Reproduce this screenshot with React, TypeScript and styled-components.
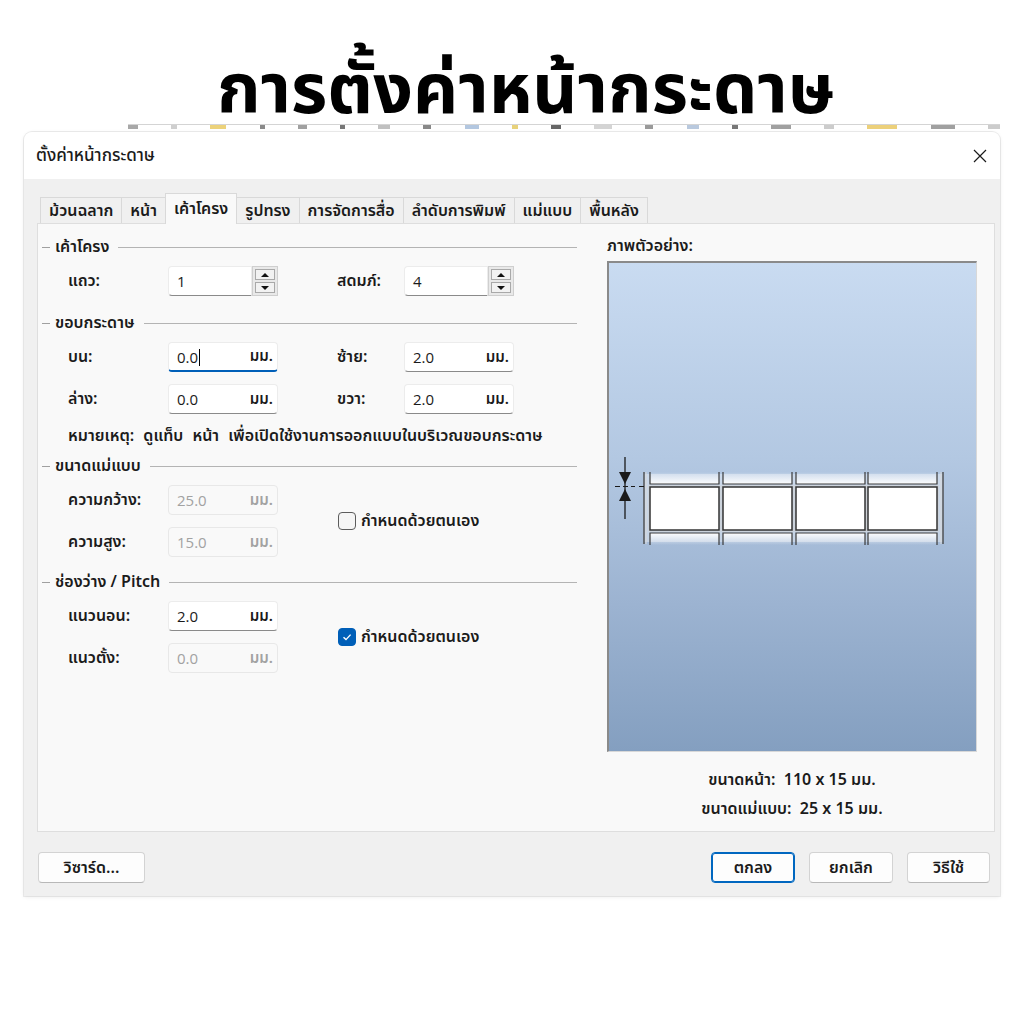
import React from 'react';
import styled, { createGlobalStyle } from 'styled-components';

const THAI = `"Noto Sans Thai", "Leelawadee UI", Tahoma, "Noto Sans", sans-serif`;

const GlobalStyle = createGlobalStyle`
  html, body {
    margin: 0;
    background: #ffffff;
    font-family: ${THAI};
    color: #1b1b1b;
  }
`;

const Page = styled.div`
  width: 1024px;
  height: 1024px;
  overflow: hidden;
  display: flex;
  flex-direction: column;
`;

const Heading = styled.h1`
  margin: 0;
  height: 124px;
  box-sizing: border-box;
  padding: 49px 0 0 28px;
  text-align: center;
  font-size: 70px;
  font-weight: 700;
  line-height: 86px;
  color: #000;
  white-space: nowrap;
`;

/* cut-off toolbar of the window behind the dialog */
const Strip = styled.div`
  height: 7px;
  margin: 0 24px 0 128px;
  display: flex;
  align-items: flex-start;
  justify-content: space-between;
  border-top: 1px solid #d4d4d4;
  overflow: hidden;
`;

const Chip = styled.span<{ $w: number; $c: string }>`
  width: ${p => p.$w}px;
  height: 4px;
  background: ${p => p.$c};
  flex: none;
`;

const Dialog = styled.div`
  margin-left: 24px;
  width: 976px;
  background: #f0f0f0;
  border-radius: 8px 8px 0 0;
  box-shadow: 0 0 0 1px rgba(0, 0, 0, 0.07), 0 1px 4px rgba(0, 0, 0, 0.08);
  overflow: hidden;
`;

const TitleBar = styled.div`
  height: 47px;
  background: #ffffff;
  display: flex;
  align-items: center;
  justify-content: space-between;
  padding: 0 12px;
  font-size: 17px;
  font-weight: 500;
`;

const Body = styled.div`
  padding: 14px 5px 0 13px;
`;

const TabBar = styled.div`
  display: flex;
  align-items: flex-end;
  height: 30px;
  padding-left: 3px;
  position: relative;
  z-index: 1;
`;

const Tab = styled.div<{ $active?: boolean }>`
  height: ${p => (p.$active ? 31 : 26)}px;
  box-sizing: border-box;
  padding: 0 8px;
  margin-right: -1px;
  margin-bottom: ${p => (p.$active ? -1 : 0)}px;
  display: flex;
  align-items: center;
  font-size: 16px;
  font-weight: 600;
  border: 1px solid #d9d9d9;
  border-bottom: none;
  background: ${p => (p.$active ? '#f9f9f9' : '#f0f0f0')};
  white-space: nowrap;
`;

const Panel = styled.div`
  height: 609px;
  box-sizing: border-box;
  border: 1px solid #dedede;
  background: #f9f9f9;
  display: flex;
`;

const LeftCol = styled.div`
  width: 552px;
  box-sizing: border-box;
  padding: 15px 12px 0 4px;
  display: flex;
  flex-direction: column;
`;

const GroupHeader = styled.div<{ $gap?: number }>`
  display: flex;
  align-items: center;
  height: 16px;
  margin-top: ${p => p.$gap ?? 0}px;
  font-size: 16px;
  font-weight: 600;
  white-space: nowrap;
  &::before {
    content: '';
    width: 8px;
    height: 1px;
    background: #a0a0a0;
    margin-right: 5px;
  }
  &::after {
    content: '';
    flex: 1;
    height: 1px;
    background: #b4b4b4;
    margin-left: 9px;
  }
`;

const FieldGrid = styled.div`
  display: grid;
  grid-template-columns: 100px 110px 59px 67px 110px;
  grid-auto-rows: 30px;
  row-gap: 12px;
  align-items: center;
  padding-left: 26px;
  margin-top: 11px;
`;

const FieldLabel = styled.span`
  font-size: 16px;
  font-weight: 600;
  white-space: nowrap;
`;

const TextBox = styled.div<{ $disabled?: boolean; $focused?: boolean }>`
  height: 30px;
  box-sizing: border-box;
  display: flex;
  align-items: center;
  padding: 0 4px 0 8px;
  background: ${p => (p.$disabled ? '#f9f9f9' : '#ffffff')};
  border: 1px solid ${p => (p.$disabled ? '#e8e8e8' : '#ececec')};
  border-bottom: ${p =>
    p.$focused ? '2px solid #005fb8' : p.$disabled ? '1px solid #e8e8e8' : '1px solid #8a8a8a'};
  border-radius: 4px;
  color: ${p => (p.$disabled ? '#a2a2a2' : '#1b1b1b')};
`;

const Value = styled.span`
  flex: 1;
  font-family: "Open Sans", ${THAI};
  font-size: 15px;
`;

const Caret = styled.span`
  display: inline-block;
  width: 1px;
  height: 17px;
  background: #000;
  vertical-align: -3px;
  margin-left: 1px;
`;

const Unit = styled.span`
  font-size: 15px;
  font-weight: 600;
`;

const Spinner = styled.div`
  display: flex;
  height: 30px;
`;

const SpinText = styled(TextBox)`
  flex: 1;
  border-radius: 4px 0 0 4px;
`;

const SpinButtons = styled.div`
  width: 26px;
  box-sizing: border-box;
  display: flex;
  flex-direction: column;
  gap: 2px;
  padding: 2px;
  background: #e9e9e9;
  border: 1px solid #cfcfcf;
`;

const SpinButton = styled.div<{ $down?: boolean }>`
  flex: 1;
  border: 1px solid #a9a9a9;
  background: #f2f2f2;
  display: flex;
  align-items: center;
  justify-content: center;
  &::after {
    content: '';
    border-left: 4px solid transparent;
    border-right: 4px solid transparent;
    ${p => (p.$down ? 'border-top: 4px solid #111;' : 'border-bottom: 4px solid #111;')}
  }
`;

const CheckField = styled.label`
  grid-column: 4 / span 2;
  grid-row: span 2;
  display: flex;
  align-items: center;
  gap: 5px;
  font-size: 16px;
  font-weight: 600;
  margin-left: 1px;
  white-space: nowrap;
`;

const Box = styled.span<{ $checked?: boolean }>`
  width: 18px;
  height: 18px;
  box-sizing: border-box;
  border-radius: 4px;
  display: flex;
  align-items: center;
  justify-content: center;
  border: 1px solid ${p => (p.$checked ? '#005fb8' : '#5c5c5c')};
  background: ${p => (p.$checked ? '#005fb8' : '#f5f5f5')};
`;

const Note = styled.div`
  margin-top: 14px;
  padding-left: 26px;
  height: 16px;
  display: flex;
  align-items: center;
  font-size: 16px;
  font-weight: 600;
  word-spacing: 5px;
  white-space: nowrap;
`;

const RightCol = styled.div`
  flex: 1;
  padding: 14px 17px 0 18px;
  display: flex;
  flex-direction: column;
`;

const PreviewLabel = styled.div`
  height: 16px;
  display: flex;
  align-items: center;
  font-size: 16px;
  font-weight: 600;
`;

const PreviewBox = styled.div`
  margin-top: 7px;
  width: 370px;
  height: 491px;
  box-sizing: border-box;
  border-top: 2px solid #8a8a8a;
  border-left: 2px solid #8a8a8a;
  border-right: 1px solid #d8d8d8;
  border-bottom: 1px solid #d8d8d8;
  background: linear-gradient(to bottom, #c9dbf1 0%, #b3c8e2 40%, #9cb3d1 70%, #849fc0 100%);
`;

const SizeInfo = styled.div`
  margin-top: 14px;
  width: 370px;
  text-align: center;
  font-size: 16px;
  font-weight: 600;
  line-height: 29px;
  white-space: pre;
`;

const Footer = styled.div`
  height: 64px;
  box-sizing: border-box;
  display: flex;
  align-items: flex-start;
  justify-content: space-between;
  padding: 20px 5px 0 1px;
`;

const ButtonGroup = styled.div`
  display: flex;
  gap: 14px;
`;

const Button = styled.button<{ $w: number; $primary?: boolean }>`
  width: ${p => p.$w}px;
  height: 31px;
  box-sizing: border-box;
  border-radius: 4px;
  font-family: ${THAI};
  font-size: 16px;
  font-weight: 600;
  color: #1b1b1b;
  background: #fdfdfd;
  border: 1px solid ${p => (p.$primary ? '#0067c0' : '#d3d3d3')};
  border-bottom-color: ${p => (p.$primary ? '#0067c0' : '#b8b8b8')};
  box-shadow: ${p => (p.$primary ? 'inset 0 0 0 1px #0067c0' : 'none')};
  padding: 0;
`;

const CloseIcon = () => (
  <svg width="16" height="16" viewBox="0 0 16 16">
    <path d="M2 2 L14 14 M14 2 L2 14" stroke="#1b1b1b" strokeWidth="1.2" />
  </svg>
);

const Tick = () => (
  <svg width="12" height="12" viewBox="0 0 12 12">
    <path d="M2.5 6.2 L5 8.6 L9.6 3.6" fill="none" stroke="#ffffff" strokeWidth="1.4" />
  </svg>
);

const cellXs = [41, 114, 187, 259];

// the label roll as it lies on the page: a row of 4 labels, the next rows cut off
const LabelSheet = () => (
  <svg width="367" height="488" viewBox="0 0 367 488" style={{ display: 'block' }}>
    <defs>
      <linearGradient id="fadeIn" x1="0" y1="0" x2="0" y2="1">
        <stop offset="0" stopColor="#ffffff" stopOpacity="0" />
        <stop offset="1" stopColor="#ffffff" stopOpacity="0.95" />
      </linearGradient>
      <linearGradient id="fadeOut" x1="0" y1="0" x2="0" y2="1">
        <stop offset="0" stopColor="#ffffff" stopOpacity="0.95" />
        <stop offset="1" stopColor="#ffffff" stopOpacity="0" />
      </linearGradient>
    </defs>
    <rect x="35" y="211" width="299" height="68" fill="#ffffff" opacity="0.35" />
    <line x1="35" y1="209" x2="35" y2="281" stroke="#4a4a4a" strokeWidth="1.4" />
    <line x1="37" y1="209" x2="37" y2="281" stroke="#d8d8d8" strokeWidth="1" />
    <line x1="334" y1="209" x2="334" y2="281" stroke="#4a4a4a" strokeWidth="1.4" />
    <line x1="332" y1="209" x2="332" y2="281" stroke="#d8d8d8" strokeWidth="1" />
    {cellXs.map(x => (
      <g key={x}>
        <rect x={x} y="209" width="69" height="12" fill="url(#fadeIn)" />
        <path d={`M${x} 209 V221 H${x + 69} V209`} fill="none" stroke="#3a3a3a" strokeWidth="1.2" />
        <rect x={x - 1} y="223" width="71" height="45" fill="none" stroke="#cfcfcf" strokeWidth="1" />
        <rect x={x} y="224" width="69" height="43" fill="#ffffff" stroke="#333333" strokeWidth="1.5" />
        <rect x={x} y="270" width="69" height="12" fill="url(#fadeOut)" />
        <path d={`M${x} 282 V270 H${x + 69} V282`} fill="none" stroke="#3a3a3a" strokeWidth="1.2" />
      </g>
    ))}
    <line x1="16" y1="194" x2="16" y2="256" stroke="#1a1a1a" strokeWidth="1.3" />
    <path d="M10 209 L22 209 L16 221 Z" fill="#1a1a1a" />
    <path d="M10 238 L22 238 L16 226 Z" fill="#1a1a1a" />
    <path d="M6 223.5 H26 M30 223.5 H35" stroke="#1a1a1a" strokeWidth="1" strokeDasharray="5 3" />
  </svg>
);

const tabs = ['ม้วนฉลาก', 'หน้า', 'เค้าโครง', 'รูปทรง', 'การจัดการสื่อ', 'ลำดับการพิมพ์', 'แม่แบบ', 'พื้นหลัง'];

const chips: Array<[number, string]> = [
  [10, '#a8a8a8'], [6, '#cfcfcf'], [16, '#ecd27a'], [5, '#8a8a8a'], [9, '#a0a0a0'],
  [5, '#777'], [12, '#c0c0c0'], [8, '#888'], [14, '#b3c7e0'], [6, '#e8d27a'],
  [10, '#666'], [18, '#d4d4d4'], [8, '#9a9a9a'], [12, '#b9c9de'], [6, '#777'],
  [20, '#a0a0a0'], [10, '#cccccc'], [30, '#ecd07a'], [24, '#a0a0a0'], [12, '#cccccc'],
];

const MmBox = ({ value, disabled, focused }: { value: string; disabled?: boolean; focused?: boolean }) => (
  <TextBox $disabled={disabled} $focused={focused}>
    <Value>
      {value}
      {focused && <Caret />}
    </Value>
    <Unit>มม.</Unit>
  </TextBox>
);

const SpinBox = ({ value }: { value: string }) => (
  <Spinner>
    <SpinText>
      <Value>{value}</Value>
    </SpinText>
    <SpinButtons>
      <SpinButton />
      <SpinButton $down />
    </SpinButtons>
  </Spinner>
);

export default function App() {
  return (
    <Page>
      <GlobalStyle />
      <Heading>การตั้งค่าหน้ากระดาษ</Heading>
      <Strip>
        {chips.map(([w, c], i) => (
          <Chip key={i} $w={w} $c={c} />
        ))}
      </Strip>
      <Dialog>
        <TitleBar>
          <span>ตั้งค่าหน้ากระดาษ</span>
          <CloseIcon />
        </TitleBar>
        <Body>
          <TabBar>
            {tabs.map(t => (
              <Tab key={t} $active={t === 'เค้าโครง'}>
                {t}
              </Tab>
            ))}
          </TabBar>
          <Panel>
            <LeftCol>
              <GroupHeader>เค้าโครง</GroupHeader>
              <FieldGrid>
                <FieldLabel>แถว:</FieldLabel>
                <SpinBox value="1" />
                <span />
                <FieldLabel>สดมภ์:</FieldLabel>
                <SpinBox value="4" />
              </FieldGrid>

              <GroupHeader $gap={19}>ขอบกระดาษ</GroupHeader>
              <FieldGrid>
                <FieldLabel>บน:</FieldLabel>
                <MmBox value="0.0" focused />
                <span />
                <FieldLabel>ซ้าย:</FieldLabel>
                <MmBox value="2.0" />
                <FieldLabel>ล่าง:</FieldLabel>
                <MmBox value="0.0" />
                <span />
                <FieldLabel>ขวา:</FieldLabel>
                <MmBox value="2.0" />
              </FieldGrid>
              <Note>หมายเหตุ: ดูแท็บ หน้า เพื่อเปิดใช้งานการออกแบบในบริเวณขอบกระดาษ</Note>

              <GroupHeader $gap={14}>ขนาดแม่แบบ</GroupHeader>
              <FieldGrid>
                <FieldLabel>ความกว้าง:</FieldLabel>
                <MmBox value="25.0" disabled />
                <span />
                <CheckField>
                  <Box />
                  กำหนดด้วยตนเอง
                </CheckField>
                <FieldLabel>ความสูง:</FieldLabel>
                <MmBox value="15.0" disabled />
              </FieldGrid>

              <GroupHeader $gap={17}>ช่องว่าง / Pitch</GroupHeader>
              <FieldGrid>
                <FieldLabel>แนวนอน:</FieldLabel>
                <MmBox value="2.0" />
                <span />
                <CheckField>
                  <Box $checked>
                    <Tick />
                  </Box>
                  กำหนดด้วยตนเอง
                </CheckField>
                <FieldLabel>แนวตั้ง:</FieldLabel>
                <MmBox value="0.0" disabled />
              </FieldGrid>
            </LeftCol>

            <RightCol>
              <PreviewLabel>ภาพตัวอย่าง:</PreviewLabel>
              <PreviewBox>
                <LabelSheet />
              </PreviewBox>
              <SizeInfo>
                {'ขนาดหน้า:  110 x 15 มม.\nขนาดแม่แบบ:  25 x 15 มม.'}
              </SizeInfo>
            </RightCol>
          </Panel>
          <Footer>
            <Button $w={107}>วิซาร์ด...</Button>
            <ButtonGroup>
              <Button $w={84} $primary>
                ตกลง
              </Button>
              <Button $w={84}>ยกเลิก</Button>
              <Button $w={83}>วิธีใช้</Button>
            </ButtonGroup>
          </Footer>
        </Body>
      </Dialog>
    </Page>
  );
}
